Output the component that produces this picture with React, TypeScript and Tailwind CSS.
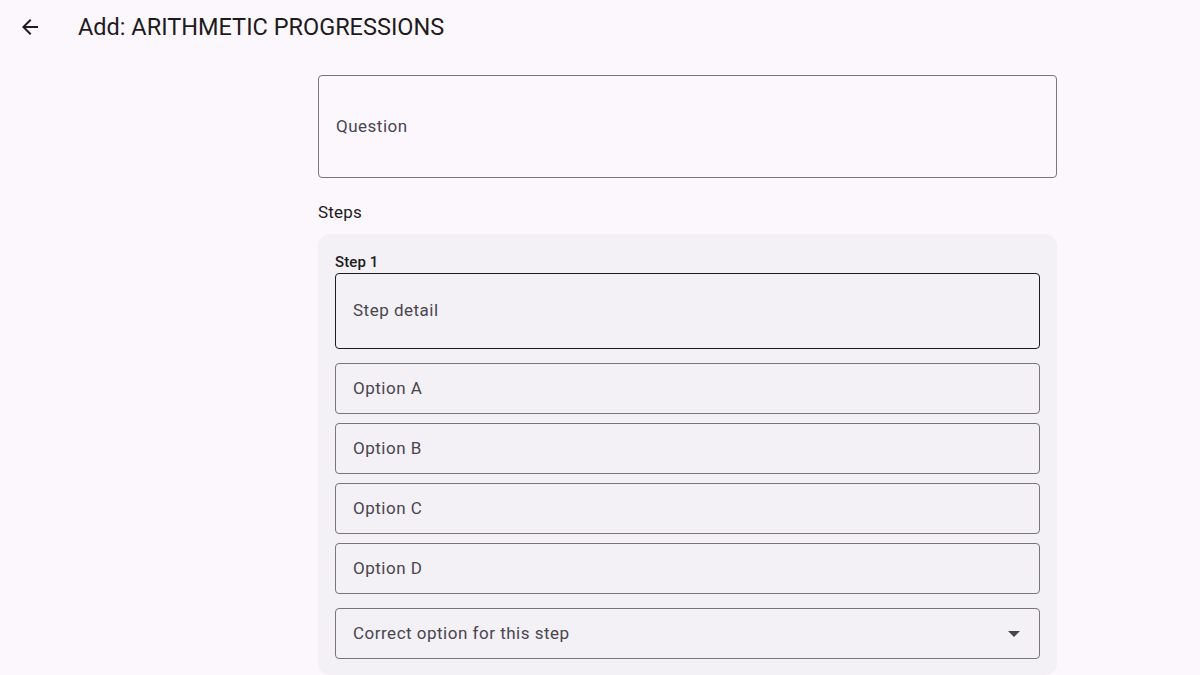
import React from "react";

function Field({ label, h, dark }: { label: string; h: string; dark?: boolean }) {
  return (
    <div
      className={`${h} w-full rounded-[4px] border ${dark ? "border-[#1d1b20]" : "border-[#79747e]"} flex items-center pl-[17px] text-[17px] text-[#49454f] tracking-[0.5px]`}
    >
      {label}
    </div>
  );
}

export default function App() {
  return (
    <div
      className="w-[1200px] h-[675px] overflow-hidden bg-[#fbf7fd] text-[#1d1b20]"
      style={{ fontFamily: "Roboto, 'Liberation Sans', sans-serif" }}
    >
      <div className="h-[54px] flex items-center">
        <div className="w-[60px] flex justify-center">
          <svg width="24" height="24" viewBox="0 0 24 24" fill="#1d1b20">
            <path d="M20 11H7.83l5.59-5.59L12 4l-8 8 8 8 1.41-1.41L7.83 13H20v-2z" />
          </svg>
        </div>
        <div className="ml-[18px] text-[23.5px] leading-[28px]">Add: ARITHMETIC PROGRESSIONS</div>
      </div>
      <div className="ml-[318px] w-[739px] pt-[21px]">
        <Field label="Question" h="h-[103px]" />
        <div className="mt-[23px] text-[17px] leading-[22px] tracking-[0.2px]">Steps</div>
        <div className="mt-[11px] rounded-[12px] bg-[#f3f0f6] px-[17px] pt-[20px] pb-[16px]">
          <div className="text-[15px] font-medium leading-[16px] mb-[3px] tracking-[0.1px]">Step 1</div>
          <Field label="Step detail" h="h-[76px]" dark />
          <div className="mt-[14px] flex flex-col gap-[9px]">
            <Field label="Option A" h="h-[51px]" />
            <Field label="Option B" h="h-[51px]" />
            <Field label="Option C" h="h-[51px]" />
            <Field label="Option D" h="h-[51px]" />
          </div>
          <div className="mt-[14px] h-[51px] w-full rounded-[4px] border border-[#79747e] flex items-center pl-[17px] pr-[19px] text-[17px] text-[#49454f] tracking-[0.5px]">
            <span className="flex-1">Correct option for this step</span>
            <svg width="12" height="6" viewBox="0 0 10 5" fill="#49454f">
              <path d="M0 0l5 5 5-5z" />
            </svg>
          </div>
        </div>
      </div>
    </div>
  );
}
